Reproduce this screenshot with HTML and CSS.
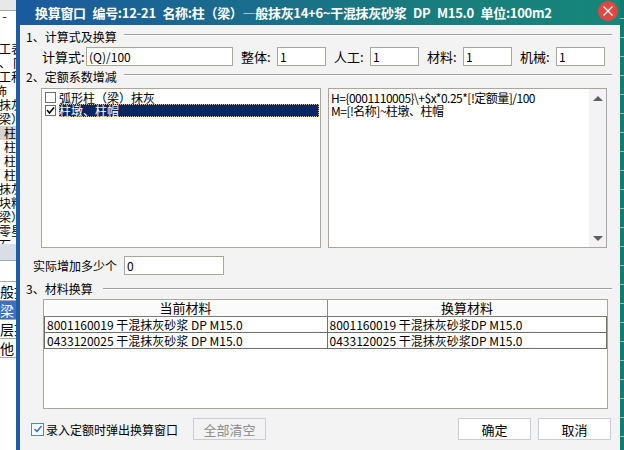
FILE: index.html
```html
<!DOCTYPE html>
<html lang="zh-CN">
<head>
    <meta charset="UTF-8">
    <title>换算窗口</title>
    <link rel="stylesheet" href="styles.css">
</head>
<body>
    <div class="screen">
        <div class="side">
            <div class="side-top"></div>
            <div class="side-tick">¯</div>
            <div class="side-list">
                <div class="srow">工表</div>
                <div class="srow">、卩</div>
                <div class="srow">工和</div>
                <div class="srow cut">饰</div>
                <div class="srow">抹灰</div>
                <div class="srow">梁）</div>
                <div class="srow pad hl">柱</div>
                <div class="srow pad">柱</div>
                <div class="srow pad">柱</div>
                <div class="srow pad">柱</div>
                <div class="srow">抹灰</div>
                <div class="srow">块料</div>
                <div class="srow">梁）</div>
                <div class="srow">零星</div>
                <div class="srow">石</div>
            </div>
            <div class="side-band"></div>
            <div class="side-list2">
                <div class="srow2">般抹</div>
                <div class="srow2 blue">梁：</div>
                <div class="srow2">层某</div>
                <div class="srow2">他</div>
            </div>
        </div>

        <div class="dialog">
            <div class="titlebar">
                <span class="title">换算窗口 编号:12-21 名称:柱（梁）—般抹灰14+6~干混抹灰砂浆 DP M15.0 单位:100m2</span>
                <span class="close">
                    <svg width="20" height="20" viewBox="0 0 20 20">
                        <circle cx="10" cy="10" r="10" fill="#e2473f"/>
                        <path d="M5.5 5.5 L14.5 14.5 M14.5 5.5 L5.5 14.5" stroke="#fff" stroke-width="1.3"/>
                    </svg>
                </span>
            </div>

            <div class="sec sec1"><span>1、计算式及换算</span><i class="rule"></i></div>
            <div class="calc-row">
                <div class="f wide"><label>计算式:</label><input type="text" value="(Q)/100"></div>
                <div class="f"><label>整体:</label><input type="text" value="1"></div>
                <div class="f"><label>人工:</label><input type="text" value="1"></div>
                <div class="f"><label>材料:</label><input type="text" value="1"></div>
                <div class="f"><label>机械:</label><input type="text" value="1"></div>
            </div>

            <div class="sec"><span>2、定额系数增减</span><i class="rule"></i></div>
            <div class="lists">
                <div class="listbox">
                    <div class="item">
                        <span class="cb"></span>
                        <span class="txt">弧形柱（梁）抹灰</span>
                    </div>
                    <div class="item sel">
                        <span class="cb">
                            <svg width="9" height="9" viewBox="0 0 9 9"><path d="M1 4 L3.5 7 L8 1.5" fill="none" stroke="#000" stroke-width="1.6"/></svg>
                        </span>
                        <span class="txt">柱墩、柱帽</span>
                    </div>
                </div>
                <div class="memo">
                    <div class="memo-text">H={0001110005}\+$x*0.25*[!定额量]/100<br>M=[!名称]~柱墩、柱帽</div>
                    <div class="vscroll">
                        <span class="arr up"></span>
                        <span class="arr down"></span>
                    </div>
                </div>
            </div>

            <div class="extra-row">
                <label>实际增加多少个</label>
                <input type="text" value="0">
            </div>

            <div class="sec sec3"><span>3、材料换算</span><i class="rule"></i></div>
            <div class="grid-box">
                <table class="grid">
                    <tr>
                        <th class="c1">当前材料</th>
                        <th>换算材料</th>
                    </tr>
                    <tr>
                        <td>8001160019 干混抹灰砂浆 DP M15.0</td>
                        <td>8001160019 干混抹灰砂浆DP M15.0</td>
                    </tr>
                    <tr>
                        <td>0433120025 干混抹灰砂浆 DP M15.0</td>
                        <td>0433120025 干混抹灰砂浆DP M15.0</td>
                    </tr>
                </table>
            </div>

            <div class="footer">
                <span class="chk">
                    <svg width="10" height="10" viewBox="0 0 10 10"><path d="M1.5 5 L4 7.5 L8.5 2" fill="none" stroke="#2b7de0" stroke-width="1.6"/></svg>
                </span>
                <span class="chk-label">录入定额时弹出换算窗口</span>
                <button class="btn clear" disabled>全部清空</button>
                <span class="spacer"></span>
                <button class="btn">确定</button>
                <button class="btn">取消</button>
            </div>
        </div>

        <div class="edge"></div>
    </div>
</body>
</html>
```

FILE: styles.css
```css
body {
    margin: 0;
    width: 624px;
    height: 450px;
    overflow: hidden;
    font-family: "Noto Sans CJK SC", "Liberation Sans", sans-serif;
    font-size: 12px;
    color: #000;
    background: #fff;
}

.screen {
    display: flex;
    height: 450px;
}

/* app behind the dialog */
.side {
    width: 16px;
    flex: none;
    overflow: hidden;
    background: #fff;
    font-size: 12px;
}

.side-top {
    height: 10px;
    background: #e8e8e8;
    border-bottom: 1px solid #a8a8a8;
}

.side-tick {
    height: 20px;
    line-height: 20px;
    padding-left: 1px;
}

.side-list {
    padding-top: 11px;
    height: 202px;
    overflow: hidden;
}

.srow {
    height: 14px;
    line-height: 14px;
    white-space: nowrap;
    margin-left: -1px;
}

.srow.cut {
    margin-left: -5px;
}

.srow.pad {
    padding-left: 5px;
}

.srow.hl {
    background: #d6d3cc;
}

.side-band {
    height: 16px;
    background: #d9dde6;
    border-bottom: 1px solid #a8a8a8;
    margin-bottom: 20px;
}

.side-list2 {
    border-top: 1px solid #a8a8a8;
}

.srow2 {
    height: 18px;
    line-height: 18px;
    white-space: nowrap;
    border-bottom: 1px solid #a8a8a8;
    font-size: 14px;
}

.srow2.blue {
    background: #3b6fc8;
    color: #fff;
}

.edge {
    width: 4px;
    flex: none;
    background: repeating-linear-gradient(180deg, #0e7d70 0 18px, #9fb7b4 18px 19px);
}

/* dialog */
.dialog {
    width: 600px;
    flex: none;
    border-left: 4px solid #1a5ca6;
    background: #f3f3f3;
    display: flex;
    flex-direction: column;
}

.titlebar {
    height: 25px;
    background: linear-gradient(90deg, #1b5a9e, #197d7c 70%, #15877a);
    display: flex;
    align-items: center;
    justify-content: space-between;
    margin-left: -4px;
    padding-left: 19px;
}

.title {
    color: #fff;
    font-weight: bold;
    font-size: 13px;
    white-space: nowrap;
    word-spacing: 4px;
    letter-spacing: -0.3px;
}

.close {
    width: 20px;
    height: 20px;
    margin-right: 2px;
    margin-top: -3px;
}

.sec {
    height: 15px;
    line-height: 15px;
    display: flex;
    align-items: center;
    margin: 3px 8px 0 6px;
    white-space: nowrap;
}

.sec1 {
    margin-top: 4px;
}

.sec3 {
    margin-top: 6px;
}

.rule {
    flex: 1;
    margin-left: 7px;
    margin-bottom: 3px;
    border-top: 1px solid #a0a0a0;
    border-bottom: 1px solid #fff;
}

.sec3 .rule {
    margin-left: 10px;
    margin-bottom: 0;
}

input[type="text"] {
    box-sizing: border-box;
    height: 19px;
    border: 1px solid #aaa799;
    background: #fff;
    font-family: inherit;
    font-size: 12px;
    padding: 0 2px;
    margin: 0;
}

.calc-row {
    display: flex;
    margin-top: 3px;
    padding-left: 22px;
    gap: 8px;
    height: 19px;
}

.f {
    display: flex;
    align-items: center;
}

.f label {
    width: 36px;
    font-size: 13px;
}

.f input {
    width: 49px;
}

.f.wide label {
    width: 44px;
}

.f.wide input {
    width: 147px;
}

.lists {
    display: flex;
    gap: 7px;
    margin-top: 4px;
    padding-left: 21px;
    height: 160px;
}

.listbox {
    box-sizing: border-box;
    width: 280px;
    border: 1px solid #aaa799;
    background: #fff;
    padding: 2px 1px 0 3px;
}

.item {
    display: flex;
    align-items: center;
    height: 13px;
    font-size: 12px;
}

.cb {
    box-sizing: border-box;
    width: 11px;
    height: 11px;
    border: 1px solid #6f6f6f;
    background: #fff;
    display: flex;
    align-items: center;
    justify-content: center;
    flex: none;
}

.txt {
    margin-left: 3px;
    line-height: 13px;
    flex: 1;
    white-space: nowrap;
}

.item.sel .txt {
    background: #0b2466;
    color: #fff;
    outline: 1px dotted #d8c060;
    outline-offset: -1px;
    height: 13px;
}

.memo {
    box-sizing: border-box;
    width: 279px;
    border: 1px solid #aaa799;
    background: #fff;
    display: flex;
}

.memo-text {
    flex: 1;
    padding: 2px 2px;
    line-height: 13px;
    letter-spacing: -0.5px;
    white-space: nowrap;
    overflow: hidden;
}

.vscroll {
    width: 17px;
    background: #f3f3f5;
    display: flex;
    flex-direction: column;
    justify-content: space-between;
    align-items: center;
    padding: 7px 0 6px;
}

.arr {
    width: 0;
    height: 0;
    border-left: 5px solid transparent;
    border-right: 5px solid transparent;
}

.arr.up {
    border-bottom: 5px solid #5e5e5e;
}

.arr.down {
    border-top: 5px solid #5e5e5e;
}

.extra-row {
    display: flex;
    align-items: center;
    gap: 7px;
    margin-top: 8px;
    padding-left: 13px;
    height: 19px;
    font-size: 12px;
}

.extra-row input {
    width: 100px;
}

.grid-box {
    box-sizing: border-box;
    margin: 3px 0 0 23px;
    width: 565px;
    height: 110px;
    border: 1px solid #aaa799;
    background: #fff;
}

.grid {
    width: 100%;
    border-collapse: collapse;
    table-layout: fixed;
}

.grid th {
    height: 16px;
    font-weight: normal;
    font-size: 13px;
    background: #fbfbfb;
    border-bottom: 1px solid #7a7a7a;
    padding: 0;
    line-height: 16px;
}

.grid th.c1 {
    width: 282px;
    border-right: 1px solid #8a8a8a;
}

.grid td {
    height: 15px;
    line-height: 15px;
    border: 1px solid #6e6e6e;
    padding: 0 2px;
    white-space: nowrap;
    overflow: hidden;
}

.footer {
    display: flex;
    align-items: center;
    margin-top: 9px;
    padding: 0 9px 0 11px;
    height: 22px;
}

.chk {
    box-sizing: border-box;
    width: 13px;
    height: 13px;
    border: 1px solid #3c8ce6;
    background: #fff;
    display: flex;
    align-items: center;
    justify-content: center;
}

.chk-label {
    margin-left: 2px;
    font-size: 12px;
}

.btn {
    box-sizing: border-box;
    width: 73px;
    height: 22px;
    border: 1px solid #c8cdd6;
    background: #fff;
    font-family: inherit;
    font-size: 13px;
    color: #000;
    padding: 0;
}

.btn.clear {
    margin-left: 15px;
    background: #f3f3f3;
    color: #8c8c8c;
}

.spacer {
    flex: 1;
}

.btn + .btn {
    margin-left: 7px;
}
```
